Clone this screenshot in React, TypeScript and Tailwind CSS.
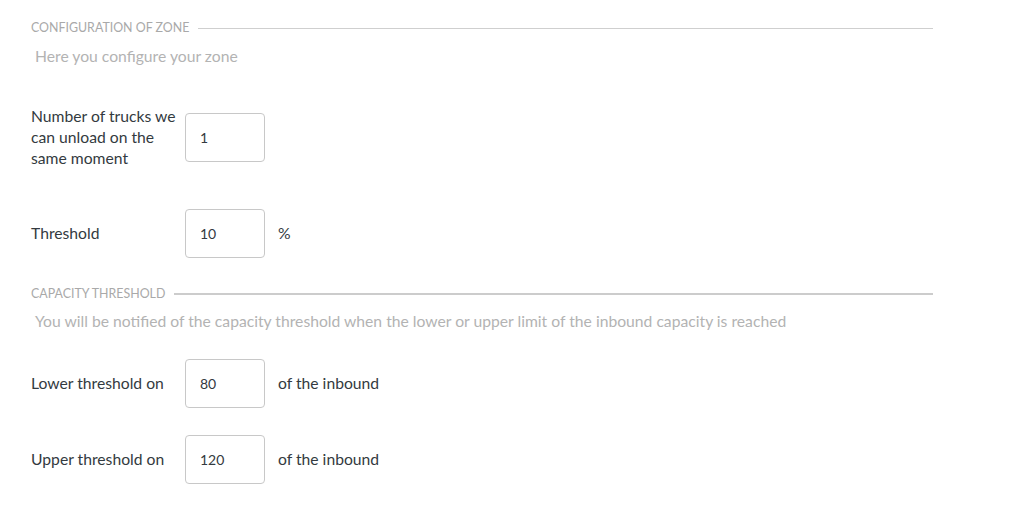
function SectionTitle({ title, thick }: { title: string; thick?: boolean }) {
  return (
    <div className="flex items-center gap-[9px] h-4">
      <span className="text-[12.4px] uppercase text-[#a9a9a9] whitespace-nowrap">{title}</span>
      <div className={`flex-1 ${thick ? "h-[2px] bg-[#cccccc]" : "h-px bg-[#cfcfcf]"}`} />
    </div>
  );
}

function Field({ label, value, suffix }: { label: string; value: string; suffix?: string }) {
  return (
    <div className="flex items-center">
      <div className="w-[154px] pr-[4px] text-[15.7px] leading-[21px] text-[#333a40]">{label}</div>
      <input
        readOnly
        value={value}
        className="w-[80px] h-[49px] border border-[#c8c8c8] rounded-[4px] pl-[14px] text-sm text-[#333a40] outline-none"
      />
      {suffix && <span className="ml-[13px] text-[15.7px] text-[#333a40]">{suffix}</span>}
    </div>
  );
}

export default function App() {
  return (
    <div className="min-h-screen bg-white font-['Lato',sans-serif]">
      <div className="w-[902px] ml-[31px] pt-5">
        <SectionTitle title="Configuration of zone" />
        <p className="mt-[10px] ml-1 text-[15.7px] leading-5 text-[#b3b3b3]">Here you configure your zone</p>

        <div className="mt-10">
          <Field label="Number of trucks we can unload on the same moment" value="1" />
        </div>
        <div className="mt-10">
          <Field label="Threshold" value="10" suffix="%" />
        </div>

        <div className="mt-7">
          <SectionTitle title="Capacity threshold" thick />
        </div>
        <p className="mt-[9px] ml-1 text-[15.7px] leading-5 text-[#b3b3b3]">
          You will be notified of the capacity threshold when the lower or upper limit of the inbound capacity is reached
        </p>

        <div className="mt-7">
          <Field label="Lower threshold on" value="80" suffix="of the inbound" />
        </div>
        <div className="mt-[27px]">
          <Field label="Upper threshold on" value="120" suffix="of the inbound" />
        </div>
      </div>
    </div>
  );
}
